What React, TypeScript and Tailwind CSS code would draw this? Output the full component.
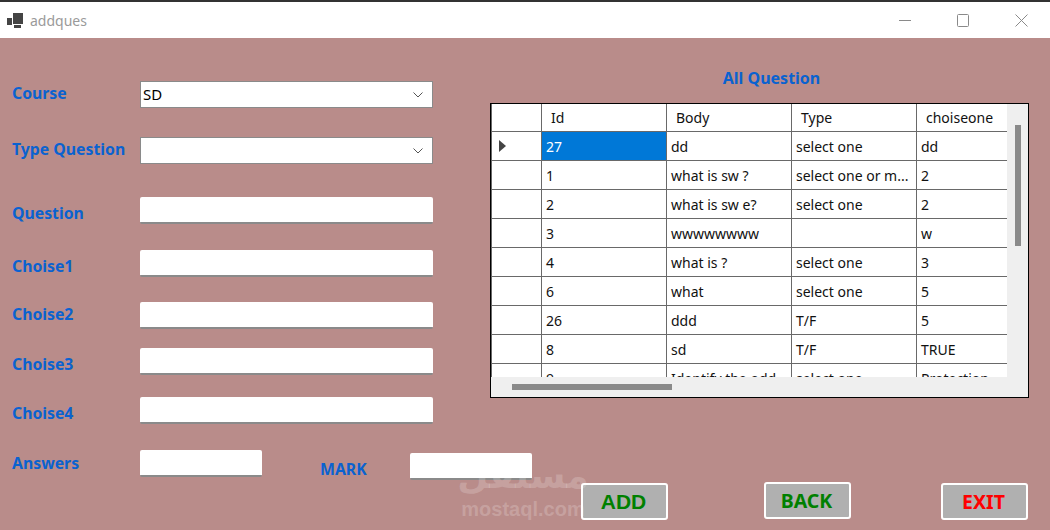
const rows = [
  ["27", "dd", "select one", "dd"],
  ["1", "what is sw ?", "select one or m...", "2"],
  ["2", "what is sw e?", "select one", "2"],
  ["3", "wwwwwwww", "", "w"],
  ["4", "what is ?", "select one", "3"],
  ["6", "what", "select one", "5"],
  ["26", "ddd", "T/F", "5"],
  ["8", "sd", "T/F", "TRUE"],
  ["9", "Identify the odd", "select one", "Protection"],
];

const columns = ["Id", "Body", "Type", "choiseone"];

function Label({ text, className }: { text: string; className?: string }) {
  return <div className={"whitespace-nowrap text-[15.8px] font-bold leading-[22px] text-[#0a62d0] " + (className ?? "")}>{text}</div>;
}

function Field({ label, top, labelTop, combo, value }: { label: string; top: string; labelTop: string; combo?: boolean; value?: string }) {
  return (
    <div className={"flex items-start " + top}>
      <Label text={label} className={"w-[128px] " + labelTop} />
      {combo ? (
        <div className="flex h-[27px] w-[293px] items-center justify-between border border-[#8a8a8a] bg-white pl-[2px] pr-[9px] text-[15px] text-black">
          <span>{value}</span>
          <svg width="10" height="6" viewBox="0 0 10 6" fill="none" stroke="#555" strokeWidth="1">
            <path d="M0.5 0.5 L5 5 L9.5 0.5" />
          </svg>
        </div>
      ) : (
        <div className="h-[27px] w-[293px] rounded-[2px] border-b-2 border-[#8a8a8a] bg-white" />
      )}
    </div>
  );
}

function ActionButton({ text, className }: { text: string; className: string }) {
  return (
    <button className={"flex h-[37px] w-[87px] items-center justify-center rounded-[3px] border-2 border-white bg-[#b0b0b0] pr-[2px] font-bold " + className}>
      {text}
    </button>
  );
}

export default function App() {
  return (
    <div className="relative flex h-[530px] w-[1050px] flex-col overflow-hidden bg-[#b98c8a] font-['Noto_Sans','Open_Sans',sans-serif]">
      {/* Title bar */}
      <div className="flex h-[38px] shrink-0 items-center justify-between border-t-2 border-[#333] bg-white">
        <div className="flex items-center pl-[7px]">
          <svg width="16" height="15" viewBox="0 0 16 15" fill="#444">
            <rect x="6" y="0" width="10" height="11" />
            <rect x="0" y="5" width="5" height="7" />
            <rect x="7" y="12" width="7" height="3" />
          </svg>
          <span className="pl-[7px] text-[14px] text-[#9a9a9a]">addques</span>
        </div>
        <div className="flex items-center gap-[46px] pr-[22px]">
          <svg width="12" height="13" viewBox="0 0 12 13" stroke="#8a8a8a" fill="none"><path d="M0 6.5 H12" /></svg>
          <svg width="12" height="13" viewBox="0 0 12 13" stroke="#8a8a8a" fill="none"><rect x="0.5" y="0.5" width="11" height="12" rx="1" /></svg>
          <svg width="13" height="13" viewBox="0 0 13 13" stroke="#8a8a8a" fill="none"><path d="M0.5 0.5 L12.5 12.5 M12.5 0.5 L0.5 12.5" /></svg>
        </div>
      </div>

      {/* Form + grid */}
      <div className="flex items-start">
        <div className="flex w-[490px] shrink-0 flex-col pl-[12px]">
          <Field label="Course" top="mt-[43px]" labelTop="mt-px" combo value="SD" />
          <Field label="Type Question" top="mt-[29px]" labelTop="mt-px" combo />
          <Field label="Question" top="mt-[33px]" labelTop="mt-[5px]" />
          <Field label="Choise1" top="mt-[26px]" labelTop="mt-[5px]" />
          <Field label="Choise2" top="mt-[25px]" labelTop="mt-px" />
          <Field label="Choise3" top="mt-[19px]" labelTop="mt-[5px]" />
          <Field label="Choise4" top="mt-[22px]" labelTop="mt-[5px]" />
        </div>

        <div className="flex w-[539px] flex-col">
          <div className="mt-[29px] h-[22px] pl-[24px] text-center text-[16px] font-bold leading-[22px] text-[#0a62d0]">All Question</div>
          <div className="relative mt-[14px] h-[295px] w-full border border-black bg-[#efefef]">
            <div className="h-[273px] w-[516px] overflow-hidden bg-white">
              <table className="w-[550px] table-fixed border-collapse text-[14px] text-[#111]">
                <thead>
                  <tr className="h-[27px]">
                    <th className="w-[50px] border-x border-b border-[#696969]" />
                    {columns.map((c) => (
                      <th key={c} className="w-[125px] border-r border-b border-[#696969] pl-[9px] text-left font-normal">{c}</th>
                    ))}
                  </tr>
                </thead>
                <tbody>
                  {rows.map((r, i) => (
                    <tr key={r[0]} className="h-[29px]">
                      <td className="border-x border-b border-[#696969] pl-[7px]">
                        {i === 0 && (
                          <svg width="7" height="12" viewBox="0 0 7 12" fill="#444"><path d="M0 0 L7 6 L0 12 Z" /></svg>
                        )}
                      </td>
                      {r.map((v, j) => (
                        <td
                          key={j}
                          className={
                            "overflow-hidden whitespace-nowrap border-r border-b border-[#696969] pl-[4px] pt-[1px] " +
                            (i === 0 && j === 0 ? "bg-[#0078d7] text-white" : "")
                          }
                        >
                          {v}
                        </td>
                      ))}
                    </tr>
                  ))}
                </tbody>
              </table>
            </div>
            {/* Scrollbar thumbs */}
            <div className="absolute left-[524px] top-[21px] h-[121px] w-[6px] bg-[#8a8a8a]" />
            <div className="absolute left-[21px] top-[280px] h-[6px] w-[160px] bg-[#8a8a8a]" />
          </div>
        </div>
      </div>

      {/* Answers + mark */}
      <div className="mt-[26px] flex items-start pl-[12px]">
        <Label text="Answers" className="mt-[2px] w-[128px]" />
        <div className="h-[27px] w-[122px] rounded-[2px] border-b-2 border-[#8a8a8a] bg-white" />
        <Label text="MARK" className="ml-[58px] mt-[8px] w-[90px]" />
        <div className="mt-[3px] h-[27px] w-[122px] rounded-[2px] border-b-2 border-[#8a8a8a] bg-white" />
      </div>

      {/* Buttons */}
      <div className="mt-[2px] flex items-start pl-[581px]">
        <ActionButton text="ADD" className="mt-px font-['Liberation_Sans',sans-serif] text-[21px] text-[#008000]" />
        <ActionButton text="BACK" className="ml-[96px] text-[19.5px] text-[#008000]" />
        <ActionButton text="EXIT" className="ml-[90px] mt-px text-[19.5px] text-[#ff0000]" />
      </div>

      {/* Watermark */}
      <div className="pointer-events-none absolute left-[458px] top-[453px] flex w-[130px] flex-col items-center text-white/20">
        <span className="whitespace-nowrap font-['DejaVu_Sans',sans-serif] text-[36px] font-bold leading-[46px]" dir="rtl">مستقل</span>
        <span className="whitespace-nowrap font-['Liberation_Sans',sans-serif] text-[20px] font-bold leading-[20px]">mostaql.com</span>
      </div>
    </div>
  );
}
